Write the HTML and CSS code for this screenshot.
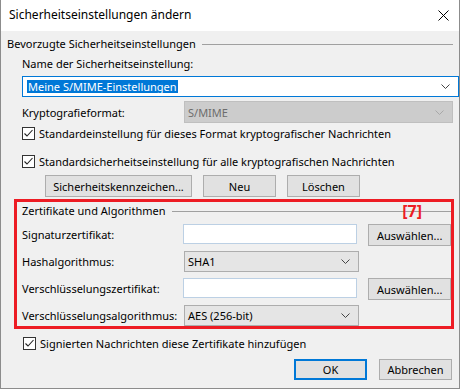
FILE: index.html
```html
<!DOCTYPE html>
<html lang="de">
<head>
    <meta charset="UTF-8">
    <title>Sicherheitseinstellungen ändern</title>
    <link rel="stylesheet" href="styles.css">
</head>
<body>
    <div class="window">
        <div class="titlebar">
            <span class="title">Sicherheitseinstellungen ändern</span>
            <svg class="close" width="11" height="11" viewBox="0 0 11 11">
                <path d="M0.5 0.5L10.5 10.5M10.5 0.5L0.5 10.5" stroke="#000" stroke-width="1"/>
            </svg>
        </div>
        <div class="content">
            <div class="legend legend-top">
                <span>Bevorzugte Sicherheitseinstellungen</span>
                <div class="rule"></div>
            </div>
            <div class="indent">
                <div class="label-row">Name der Sicherheitseinstellung:</div>
                <div class="combo combo-active">
                    <span class="selected">Meine S/MIME-Einstellungen</span>
                    <svg class="chevron" width="9" height="5" viewBox="0 0 9 5"><path d="M0.5 0.5L4.5 4.5L8.5 0.5" fill="none" stroke="#444" stroke-width="1"/></svg>
                </div>
                <div class="form-row row-krypto">
                    <span class="form-label">Kryptografieformat:</span>
                    <div class="combo combo-disabled">
                        <span>S/MIME</span>
                        <svg class="chevron" width="9" height="5" viewBox="0 0 9 5"><path d="M0.5 0.5L4.5 4.5L8.5 0.5" fill="none" stroke="#a8a8a8" stroke-width="1"/></svg>
                    </div>
                </div>
                <div class="check-row check-first">
                    <span class="checkbox"><svg width="11" height="11" viewBox="0 0 11 11"><path d="M1.5 5.5L4 8L9.5 2" fill="none" stroke="#222" stroke-width="1.1"/></svg></span>
                    <span>Standardeinstellung für dieses Format kryptografischer Nachrichten</span>
                </div>
                <div class="check-row">
                    <span class="checkbox"><svg width="11" height="11" viewBox="0 0 11 11"><path d="M1.5 5.5L4 8L9.5 2" fill="none" stroke="#222" stroke-width="1.1"/></svg></span>
                    <span>Standardsicherheitseinstellung für alle kryptografischen Nachrichten</span>
                </div>
                <div class="button-row">
                    <button class="btn btn-labels">Sicherheitskennzeichen...</button>
                    <button class="btn btn-new">Neu</button>
                    <button class="btn btn-delete">Löschen</button>
                </div>
            </div>

            <div class="highlight">
                <div class="legend legend-inner">
                    <span>Zertifikate und Algorithmen</span>
                    <div class="rule"></div>
                    <span class="marker">[7]</span>
                </div>
                <div class="form-row cert-row">
                    <span class="form-label">Signaturzertifikat:</span>
                    <div class="field"></div>
                    <button class="btn btn-pick">Auswählen...</button>
                </div>
                <div class="form-row cert-row">
                    <span class="form-label">Hashalgorithmus:</span>
                    <div class="combo combo-small">
                        <span>SHA1</span>
                        <svg class="chevron" width="9" height="5" viewBox="0 0 9 5"><path d="M0.5 0.5L4.5 4.5L8.5 0.5" fill="none" stroke="#444" stroke-width="1"/></svg>
                    </div>
                </div>
                <div class="form-row cert-row">
                    <span class="form-label">Verschlüsselungszertifikat:</span>
                    <div class="field"></div>
                    <button class="btn btn-pick">Auswählen...</button>
                </div>
                <div class="form-row cert-row">
                    <span class="form-label">Verschlüsselungsalgorithmus:</span>
                    <div class="combo combo-small">
                        <span>AES (256-bit)</span>
                        <svg class="chevron" width="9" height="5" viewBox="0 0 9 5"><path d="M0.5 0.5L4.5 4.5L8.5 0.5" fill="none" stroke="#444" stroke-width="1"/></svg>
                    </div>
                </div>
            </div>

            <div class="check-row check-bottom">
                <span class="checkbox"><svg width="11" height="11" viewBox="0 0 11 11"><path d="M1.5 5.5L4 8L9.5 2" fill="none" stroke="#222" stroke-width="1.1"/></svg></span>
                <span>Signierten Nachrichten diese Zertifikate hinzufügen</span>
            </div>

            <div class="footer">
                <button class="btn btn-ok">OK</button>
                <button class="btn btn-cancel">Abbrechen</button>
            </div>
        </div>
    </div>
</body>
</html>
```

FILE: styles.css
```css
body {
    margin: 0;
    font-family: "Noto Sans", sans-serif;
    font-size: 11px;
    color: #000;
}

.window {
    width: 460px;
    height: 389px;
    box-sizing: border-box;
    background-color: #f0f0f0;
    border-left: 1px solid #8c8c8c;
    border-right: 1px solid #8c8c8c;
    border-bottom: 1px solid #8c8c8c;
}

.titlebar {
    height: 31px;
    background: #ffffff;
    display: flex;
    align-items: center;
    justify-content: space-between;
    padding: 0 10px 0 8px;
    font-size: 12px;
}

.title {
    margin-top: -2px;
}

.content {
    padding-left: 6px;
}

.legend {
    display: flex;
    align-items: center;
    height: 16px;
    line-height: 16px;
}

.legend-top {
    margin-top: 5px;
}

.legend .rule {
    flex: 1;
    height: 1px;
    background: #a0a0a0;
    margin-left: 6px;
    margin-right: 6px;
}

.indent {
    padding-left: 15px;
}

.label-row {
    height: 16px;
    line-height: 16px;
    margin-top: 4px;
}

.combo {
    box-sizing: border-box;
    height: 21px;
    display: flex;
    align-items: center;
    justify-content: space-between;
    border: 1px solid #adadad;
    background: #e5e5e5;
    padding: 0 8px 0 3px;
}

.combo-active {
    margin-top: 4px;
    width: 437px;
    background: #ffffff;
    border-color: #0078d7;
    padding-left: 4px;
}

.selected {
    background: #0078d7;
    color: #ffffff;
    line-height: 13px;
    padding: 0 1px;
}

.combo-disabled {
    width: 269px;
    height: 22px;
    background: #cccccc;
    border-color: #bfbfbf;
    color: #6d6d6d;
}

.form-row {
    display: flex;
    align-items: center;
    height: 22px;
}

.form-label {
    width: 162px;
}

.row-krypto {
    margin-top: 4px;
}

.check-row {
    display: flex;
    align-items: center;
    height: 16px;
}

.check-first {
    margin-top: 2px;
}

.check-row + .check-row {
    margin-top: 12px;
}

.checkbox {
    box-sizing: border-box;
    width: 13px;
    height: 13px;
    border: 1px solid #333;
    background: #ffffff;
    margin-right: 4px;
    display: flex;
    align-items: center;
    justify-content: center;
}

.button-row {
    display: flex;
    gap: 11px;
    margin-top: 6px;
    padding-left: 23px;
}

.btn {
    box-sizing: border-box;
    height: 22px;
    border: 1px solid #adadad;
    background: #e1e1e1;
    font-family: inherit;
    font-size: 11px;
    color: #000;
    padding: 0;
}

.btn-labels {
    width: 147px;
}

.btn-new,
.btn-delete {
    width: 73px;
}

.highlight {
    box-sizing: border-box;
    width: 440px;
    height: 130px;
    margin-left: 7px;
    margin-top: 2px;
    border: 3px solid #ed1c24;
    padding-left: 5px;
}

.legend-inner {
    margin-top: 1px;
    position: relative;
}

.legend-inner .rule {
    margin-right: 0;
}

.marker {
    position: absolute;
    right: 29px;
    top: 0;
    line-height: 16px;
    color: #ed1c24;
    font-weight: bold;
    font-size: 16px;
}

.cert-row {
    align-items: flex-start;
    margin-top: 5px;
}

.cert-row .form-label {
    line-height: 21px;
}

.field {
    box-sizing: border-box;
    width: 175px;
    height: 20px;
    background: #ffffff;
    border: 1px solid #bcd0e4;
}

.btn-pick {
    width: 83px;
    margin-left: 11px;
}

.combo-small {
    width: 175px;
}

.check-bottom {
    margin-top: 6px;
    margin-left: 16px;
}

.footer {
    display: flex;
    justify-content: flex-end;
    gap: 12px;
    margin-top: 8px;
    padding-right: 7px;
}

.btn-ok,
.btn-cancel {
    width: 73px;
    height: 21px;
}

.btn-ok {
    border: 2px solid #0078d7;
}
```
